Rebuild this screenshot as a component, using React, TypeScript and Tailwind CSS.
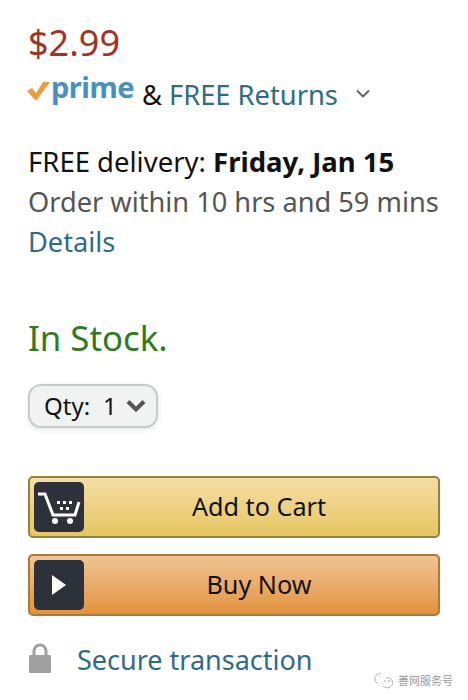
import React from 'react';

const Link: React.FC<{ className?: string; children: React.ReactNode }> = ({ className = '', children }) => (
  <span className={`text-[#2f6b85] ${className}`}>{children}</span>
);

const ActionButton: React.FC<{ label: string; tone: string; icon: React.ReactNode }> = ({ label, tone, icon }) => (
  <div className={`flex items-center h-[62px] rounded-[5px] border-2 p-[4px] ${tone}`}>
    <div className="flex items-center justify-center w-[50px] h-[50px] rounded-[5px] bg-[#2c313a] shrink-0">{icon}</div>
    <div className="flex-1 text-center text-[25.2px] text-[#111]">{label}</div>
  </div>
);

export default function App() {
  return (
    <div className="relative w-[468px] h-[700px] bg-white overflow-hidden font-['Noto_Sans',sans-serif] text-[#111]">
      <div className="pl-[28px] pr-[20px] pt-[19px]">
        <div className="text-[36px] leading-[48px] text-[#a5321f]">$2.99</div>

        <div className="flex items-center h-[44px] mt-[6px] text-[27.3px]">
          <div className="flex items-center w-[105px] h-[40px] -mt-[14px] shrink-0">
            <svg width="24" height="24" viewBox="0 0 24 24" className="shrink-0 mt-[7px] -ml-[1px]">
              <path d="M0 11 L9 21 L23 2 L16 2 L9 13 L5 8 Z" fill="#e8a03f" />
            </svg>
            <span className="text-[#4a90bf] font-bold text-[29px] leading-none tracking-[-0.5px] -mt-[4px]">prime</span>
          </div>
          <span className="ml-[9px]">&amp;</span>
          <Link className="ml-[7px]">FREE Returns</Link>
          <svg width="16" height="10" viewBox="0 0 16 10" className="ml-[17px] -mt-[2px]">
            <path d="M2 1.5 L8 7.5 L14 1.5" fill="none" stroke="#5a5f63" strokeWidth="1.8" />
          </svg>
        </div>

        <div className="mt-[25px] leading-[40px] whitespace-nowrap">
          <div className="text-[27.5px]">FREE delivery: <span className="font-bold">Friday, Jan 15</span></div>
          <div className="text-[27.2px] text-[#555]">Order within 10 hrs and 59 mins</div>
          <Link className="text-[27.2px]">Details</Link>
        </div>

        <div className="mt-[49px] text-[34.8px] leading-[46px] text-[#2f7a1f]">In Stock.</div>

        <div className="mt-[23px] inline-flex items-center w-[130px] h-[44px] rounded-[13px] border-2 border-[#c8c9c9] bg-[#f1f2f2] shadow-[0_2px_5px_rgba(0,0,0,0.1)] pl-[14px] text-[24px]">
          <span>Qty:</span>
          <span className="ml-[13px]">1</span>
          <svg width="20" height="14" viewBox="0 0 20 14" className="ml-[9px]">
            <path d="M2 2.5 L10 10.5 L18 2.5" fill="none" stroke="#555" strokeWidth="4" />
          </svg>
        </div>

        <div className="mt-[48px] flex flex-col gap-[16px] w-[412px]">
          <ActionButton
            label="Add to Cart"
            tone="border-[#97803f] bg-gradient-to-b from-[#f5dea6] to-[#e6c65f]"
            icon={
              <svg width="46" height="40" viewBox="0 0 46 40">
                <path d="M2 7 H9 L17 28 H39 L43 15" fill="none" stroke="#fff" strokeWidth="3" />
                <circle cx="19" cy="34" r="3" fill="#fff" />
                <circle cx="34" cy="34" r="3" fill="#fff" />
                <g fill="#fff">
                  <rect x="21" y="14" width="3" height="3" />
                  <rect x="27" y="14" width="3" height="3" />
                  <rect x="33" y="14" width="3" height="3" />
                  <rect x="24" y="20" width="3" height="3" />
                  <rect x="30" y="20" width="3" height="3" />
                </g>
              </svg>
            }
          />
          <ActionButton
            label="Buy Now"
            tone="border-[#ad7a35] bg-gradient-to-b from-[#f0c594] to-[#e2923a]"
            icon={
              <svg width="16" height="22" viewBox="0 0 16 22">
                <path d="M1 1 L15 11 L1 21 Z" fill="#fff" />
              </svg>
            }
          />
        </div>

        <div className="mt-[22px] flex items-center h-[44px]">
          <svg width="24" height="32" viewBox="0 0 24 32" className="shrink-0 -mt-[4px]">
            <path d="M6 14 V9 a6 6 0 0 1 12 0 V14" fill="none" stroke="#a0a0a0" strokeWidth="3" />
            <rect x="1" y="13" width="22" height="18" rx="1.5" fill="#a0a0a0" />
          </svg>
          <Link className="ml-[25px] text-[27px]">Secure transaction</Link>
        </div>
      </div>

      <div className="absolute left-[374px] top-[671px] flex items-center gap-[4px]">
        <svg width="20" height="18" viewBox="0 0 20 18">
          <path d="M7 2 A7 6 0 0 0 4 13 M12 7 A5.5 5 0 1 1 9 15" fill="none" stroke="#b5b5b5" strokeWidth="1" />
          <circle cx="11" cy="10" r="0.8" fill="#999" />
          <circle cx="15" cy="10" r="0.8" fill="#999" />
        </svg>
        <span className="text-[11px] leading-none text-[#9a9a9a] font-['Noto_Sans_CJK_SC',sans-serif]">善网服务号</span>
      </div>
    </div>
  );
}
